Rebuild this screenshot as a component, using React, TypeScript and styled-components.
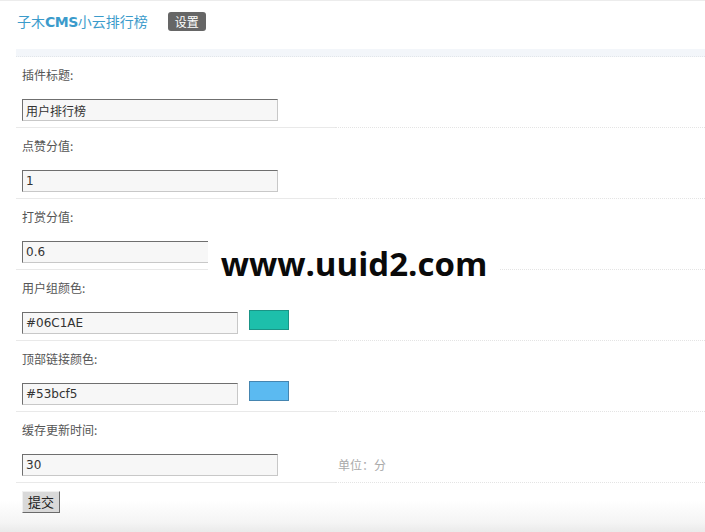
import styled, { createGlobalStyle } from "styled-components";

const GlobalStyle = createGlobalStyle`
  html, body {
    margin: 0;
    padding: 0;
    background: #fff;
  }
  body {
    font-family: "Noto Sans CJK SC", "DejaVu Sans", sans-serif;
  }
`;

const Page = styled.div`
  position: relative;
  width: 705px;
  height: 532px;
  overflow: hidden;
  border-top: 1px solid #ececec;
  box-sizing: border-box;
`;

const Header = styled.div`
  height: 48px;
  display: flex;
  align-items: center;
  padding-left: 17px;
  padding-bottom: 8px;
  box-sizing: border-box;
`;

const Title = styled.h2`
  margin: 0;
  font-size: 14px;
  font-weight: normal;
  color: #3b9bcb;
  line-height: 20px;
  b {
    font-family: "DejaVu Sans", sans-serif;
    font-size: 14px;
    font-weight: bold;
    letter-spacing: -0.5px;
  }
`;

const SetButton = styled.span`
  margin-left: 20px;
  height: 19px;
  padding: 0 7px;
  background: #666;
  color: #fff;
  font-size: 12px;
  line-height: 19px;
  border-radius: 3px;
`;

const TableHead = styled.div`
  margin-left: 16px;
  height: 7px;
  background: #f3f6fa;
  border-bottom: 1px dotted #e2e6ea;
`;

const Row = styled.div`
  display: flex;
  margin-left: 16px;
`;

const LeftCell = styled.div`
  width: 319px;
  padding: 8px 0 6px 6px;
  box-sizing: border-box;
  border-bottom: 1px solid #e9e9e9;
`;

const RightCell = styled.div`
  flex: 1;
  padding: 42px 0 6px 3px;
  border-bottom: 1px dotted #e4e4e4;
`;

const Label = styled.div`
  font-size: 12px;
  line-height: 20px;
  color: #555;
  margin-bottom: 14px;
`;

const Field = styled.div`
  display: flex;
  align-items: flex-start;
  gap: 11px;
`;

const TextInput = styled.input<{ $w: number }>`
  display: block;
  width: ${(p) => p.$w}px;
  height: 22px;
  box-sizing: border-box;
  margin: 0;
  padding: 0 3px;
  font-family: "DejaVu Sans", "Noto Sans CJK SC", sans-serif;
  font-size: 12px;
  color: #333;
  background: #f7f7f7;
  border: 1px solid #c8c8c8;
  border-top-color: #6f6f6f;
  border-left-color: #6f6f6f;
  outline: none;
`;

const Swatch = styled.span<{ $c: string; $b: string }>`
  width: 40px;
  height: 20px;
  margin-top: -2px;
  box-sizing: border-box;
  background: ${(p) => p.$c};
  border: 1px solid ${(p) => p.$b};
`;

const Note = styled.div`
  font-size: 12px;
  line-height: 22px;
  height: 22px;
  color: #aaa;
`;

const Footer = styled.div`
  height: 50px;
  padding: 8px 0 0 22px;
  box-sizing: border-box;
  background: linear-gradient(to bottom, #fff 35%, #f4f4f4 80%, #e9e9e9 100%);
`;

const Submit = styled.button`
  display: block;
  height: 22px;
  padding: 0 5px;
  font-family: "Noto Sans CJK SC", sans-serif;
  font-size: 13px;
  line-height: 20px;
  color: #222;
  background: #d9d9d9;
  border: 1px solid #6a6a6a;
  border-top-color: #f0f0f0;
  border-left-color: #f0f0f0;
`;

const Watermark = styled.div`
  position: absolute;
  left: 208px;
  top: 222px;
  width: 292px;
  height: 80px;
  background: #fff;
  display: flex;
  align-items: center;
  justify-content: center;
  font-family: "Open Sans", "DejaVu Sans", sans-serif;
  font-weight: bold;
  font-size: 33px;
  color: #0a0a0a;
`;

type Item = {
  label: string;
  value: string;
  width: number;
  swatch?: { c: string; b: string };
  note?: string;
};

const items: Item[] = [
  { label: "插件标题:", value: "用户排行榜", width: 256 },
  { label: "点赞分值:", value: "1", width: 256 },
  { label: "打赏分值:", value: "0.6", width: 256 },
  { label: "用户组颜色:", value: "#06C1AE", width: 216, swatch: { c: "#1dbfab", b: "#1a9486" } },
  { label: "顶部链接颜色:", value: "#53bcf5", width: 216, swatch: { c: "#5bbaf1", b: "#4585b0" } },
  { label: "缓存更新时间:", value: "30", width: 256, note: "单位：分" },
];

export default function App() {
  return (
    <>
      <GlobalStyle />
      <Page>
        <Header>
          <Title>
            子木<b>CMS</b>小云排行榜
          </Title>
          <SetButton>设置</SetButton>
        </Header>
        <TableHead />
        {items.map((item) => (
          <Row key={item.label}>
            <LeftCell>
              <Label>{item.label}</Label>
              <Field>
                <TextInput $w={item.width} defaultValue={item.value} />
                {item.swatch && <Swatch $c={item.swatch.c} $b={item.swatch.b} />}
              </Field>
            </LeftCell>
            <RightCell>{item.note && <Note>{item.note}</Note>}</RightCell>
          </Row>
        ))}
        <Footer>
          <Submit>提交</Submit>
        </Footer>
        <Watermark>www.uuid2.com</Watermark>
      </Page>
    </>
  );
}
